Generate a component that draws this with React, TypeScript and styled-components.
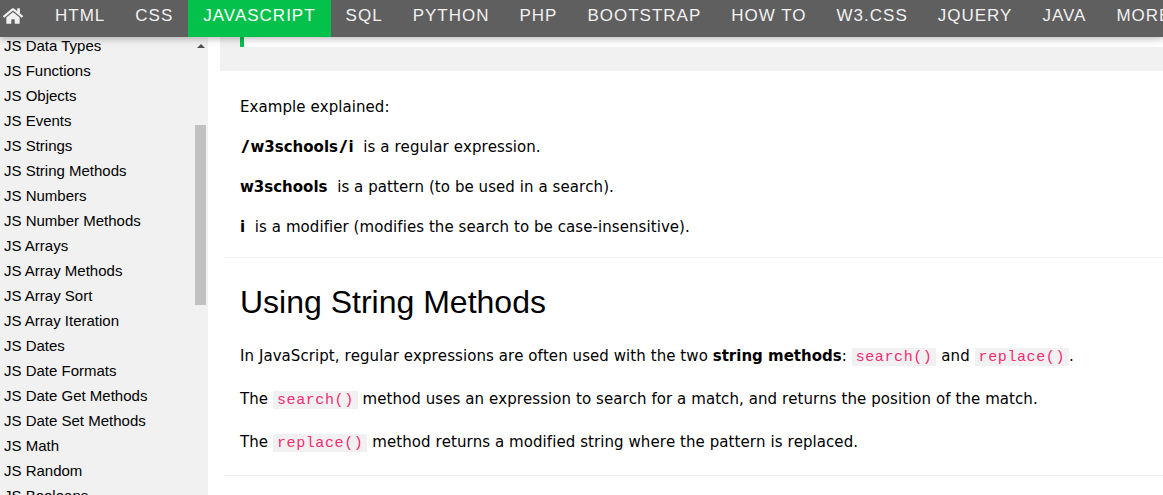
import styled, { createGlobalStyle } from "styled-components";
import { FaHome } from "react-icons/fa";

const GlobalStyle = createGlobalStyle`
  html, body {
    margin: 0;
    height: 100%;
    overflow: hidden;
    background: #fff;
  }
`;

const Page = styled.div`
  width: 1163px;
  height: 495px;
  display: flex;
  flex-direction: column;
  overflow: hidden;
`;

const TopNav = styled.nav`
  position: relative;
  z-index: 2;
  flex: none;
  height: 37px;
  display: flex;
  background: #5f5f5f;
  box-shadow: 0 2px 5px rgba(0, 0, 0, 0.16), 0 2px 10px rgba(0, 0, 0, 0.12);
  overflow: hidden;
`;

const HomeLink = styled.a`
  flex: none;
  width: 40px;
  height: 31px;
  padding-left: 3px;
  box-sizing: border-box;
  display: flex;
  align-items: center;
  color: #f1f1f1;
  svg {
    width: 20px;
    height: 18px;
  }
`;

const NavLink = styled.a<{ $active?: boolean }>`
  flex: none;
  padding: 0 15px;
  line-height: 31px;
  font-family: "Liberation Sans", Arial, sans-serif;
  font-size: 17px;
  letter-spacing: 1px;
  white-space: nowrap;
  color: ${(props) => (props.$active ? "#fff" : "#f1f1f1")};
  background: ${(props) => (props.$active ? "#04c14b" : "transparent")};
`;

const Body = styled.div`
  flex: 1;
  min-height: 0;
  display: flex;
`;

const Sidebar = styled.aside`
  position: relative;
  flex: none;
  width: 208px;
  background: #f1f1f1;
  overflow: hidden;
`;

const SideList = styled.div`
  margin-top: -4px;
`;

const SideItem = styled.a`
  display: block;
  height: 25px;
  padding-left: 4px;
  font-family: "Liberation Sans", Arial, sans-serif;
  font-size: 15px;
  line-height: 25px;
  color: #000;
`;

const ScrollArrow = styled.div`
  position: absolute;
  top: 7px;
  right: 3px;
  width: 0;
  height: 0;
  border-left: 4px solid transparent;
  border-right: 4px solid transparent;
  border-bottom: 4px solid #505050;
`;

const ScrollThumb = styled.div`
  position: absolute;
  top: 88px;
  right: 2px;
  width: 11px;
  height: 180px;
  background: #c1c1c1;
`;

const Main = styled.main`
  flex: 1;
  min-width: 0;
  padding-left: 12px;
  overflow: hidden;
  font-family: "DejaVu Sans", Verdana, sans-serif;
  font-size: 15px;
  font-kerning: none;
  letter-spacing: 0.07px;
  color: #000;
`;

const ExampleBox = styled.div`
  height: 34px;
  padding-left: 20px;
  background: #f1f1f1;
`;

const CodeStub = styled.div`
  height: 10px;
  background: #fff;
  border-left: 4px solid #04c14b;
`;

const Article = styled.div`
  padding: 27px 0 0 4px;
`;

const Para = styled.p<{ $tall?: boolean; $after?: number }>`
  margin: 0 0 ${(props) => props.$after ?? 22}px;
  padding-left: 16px;
  height: ${(props) => (props.$tall ? "20.5px" : "18px")};
  line-height: ${(props) => (props.$tall ? "20.5px" : "18px")};
  white-space: nowrap;
`;

const Strong = styled.b`
  font-weight: 700;
  letter-spacing: 0;
`;

const Slash = styled.span`
  display: inline-block;
  width: 10.5px;
  text-align: center;
  transform: scaleX(1.4);
`;

const Divider = styled.hr`
  margin: 0;
  border: 0;
  border-top: 1px solid #eee;
`;

const Heading = styled.h2`
  margin: 25px 0 25px;
  padding-left: 16px;
  font-family: "Liberation Sans", Arial, sans-serif;
  font-size: 32px;
  line-height: 38px;
  font-weight: 400;
  letter-spacing: 0;
`;

const InlineCode = styled.code`
  padding: 1px 4px 0;
  background: #f1f1f1;
  color: #f22d72;
  font-family: "Liberation Mono", "Courier New", monospace;
  font-size: 15px;
  letter-spacing: 0.6px;
`;

const navItems = [
  "HTML",
  "CSS",
  "JAVASCRIPT",
  "SQL",
  "PYTHON",
  "PHP",
  "BOOTSTRAP",
  "HOW TO",
  "W3.CSS",
  "JQUERY",
  "JAVA",
  "MORE",
];

const sideItems = [
  "JS Data Types",
  "JS Functions",
  "JS Objects",
  "JS Events",
  "JS Strings",
  "JS String Methods",
  "JS Numbers",
  "JS Number Methods",
  "JS Arrays",
  "JS Array Methods",
  "JS Array Sort",
  "JS Array Iteration",
  "JS Dates",
  "JS Date Formats",
  "JS Date Get Methods",
  "JS Date Set Methods",
  "JS Math",
  "JS Random",
  "JS Booleans",
];

export default function App() {
  return (
    <Page>
      <GlobalStyle />
      <TopNav>
        <HomeLink>
          <FaHome />
        </HomeLink>
        {navItems.map((item) => (
          <NavLink key={item} $active={item === "JAVASCRIPT"}>
            {item}
          </NavLink>
        ))}
      </TopNav>
      <Body>
        <Sidebar>
          <SideList>
            {sideItems.map((item) => (
              <SideItem key={item}>{item}</SideItem>
            ))}
          </SideList>
          <ScrollArrow />
          <ScrollThumb />
        </Sidebar>
        <Main>
          <ExampleBox>
            <CodeStub />
          </ExampleBox>
          <Article>
            <Para>Example explained:</Para>
            <Para>
              <Strong>
                <Slash>/</Slash>w3schools<Slash>/</Slash>i
              </Strong>
              &nbsp; is a regular expression.
            </Para>
            <Para>
              <Strong>w3schools</Strong>&nbsp; is a pattern (to be used in a search).
            </Para>
            <Para $after={21}>
              <Strong>i</Strong>&nbsp; is a modifier (modifies the search to be case-insensitive).
            </Para>
            <Divider />
            <Heading>Using String Methods</Heading>
            <Para $tall>
              In JavaScript, regular expressions are often used with the two{" "}
              <Strong>string methods</Strong>: <InlineCode>search()</InlineCode> and{" "}
              <InlineCode>replace()</InlineCode>.
            </Para>
            <Para $tall $after={23}>
              The <InlineCode>search()</InlineCode> method uses an expression to search for a match,
              and returns the position of the match.
            </Para>
            <Para $tall>
              The <InlineCode>replace()</InlineCode> method returns a modified string where the
              pattern is replaced.
            </Para>
            <Divider />
          </Article>
        </Main>
      </Body>
    </Page>
  );
}
